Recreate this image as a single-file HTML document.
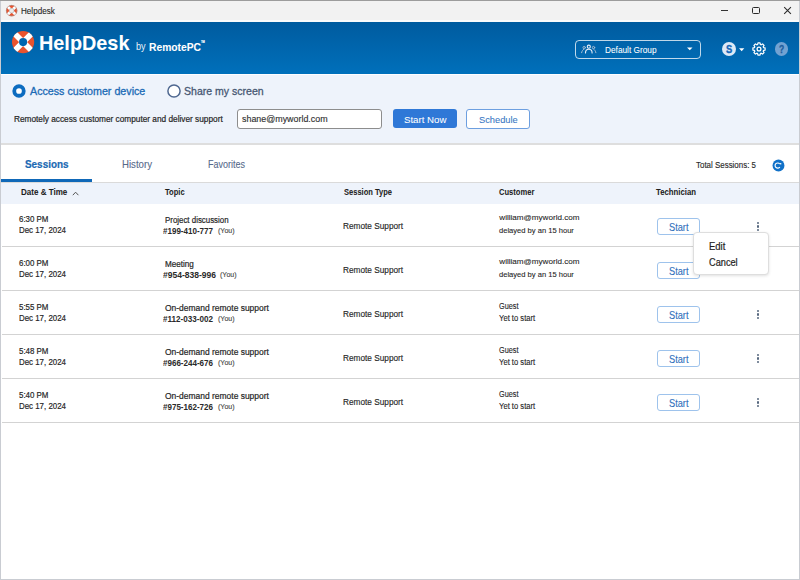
<!DOCTYPE html><html><head><meta charset="utf-8"><style>
html,body{margin:0;padding:0;width:800px;height:580px;overflow:hidden;background:#fff;}
body{position:relative;font-family:"Liberation Sans",sans-serif;}
.t{position:absolute;white-space:nowrap;line-height:1;transform-origin:0 0;}
.b{position:absolute;box-sizing:content-box;}
svg{overflow:visible}
</style></head><body>
<div class="b" style="left:0;top:0;width:800px;height:22px;background:#f2f2f2;"></div>
<div class="b" style="left:0;top:20px;width:800px;height:2px;background:#fbfbfb;"></div>
<div class="t" style="left:20.60px;top:6.75px;font-size:8.8px;color:#262626;-webkit-text-stroke:0.12px #262626;transform:scaleX(0.920);">Helpdesk</div>
<svg width="11.3" height="11.3" viewBox="-5.65 -5.65 11.3 11.3" style="position:absolute;left:5.549999999999999px;top:4.75px">
<defs><clipPath id="c11"><circle r="5.65"/></clipPath></defs>
<circle r="5.65" fill="#e9532e"/>
<g clip-path="url(#c11)"><path d="M-5.65 -5.65L5.65 5.65M5.65 -5.65L-5.65 5.65" stroke="#fff" stroke-width="2.8"/></g>
<circle r="2.2" fill="#ececec"/><circle r="5.3500000000000005" fill="none" stroke="#9a9a9a" stroke-width="0.6"/><circle r="2.4000000000000004" fill="none" stroke="#9a9a9a" stroke-width="0.5"/>
</svg>
<div class="b" style="left:721px;top:10px;width:7px;height:1px;background:#333;"></div>
<div class="b" style="left:752px;top:6.8px;width:5.8px;height:5.4px;border:1px solid #2a2a2a;border-radius:1.5px;"></div>
<svg width="10" height="10" style="position:absolute;left:783px;top:6px" viewBox="0 0 10 10"><path d="M1.2 1.2L7.9 7.9M7.9 1.2L1.2 7.9" stroke="#2a2a2a" stroke-width="1.05"/></svg>
<div class="b" style="left:0;top:22px;width:800px;height:52px;background:linear-gradient(#005b9f,#0070bb);"></div>
<svg width="22.2" height="22.2" viewBox="-11.1 -11.1 22.2 22.2" style="position:absolute;left:12.000000000000002px;top:31.1px">
<defs><clipPath id="c23"><circle r="11.1"/></clipPath></defs>
<circle r="11.1" fill="#e9532e"/>
<g clip-path="url(#c23)"><path d="M-11.1 -11.1L11.1 11.1M11.1 -11.1L-11.1 11.1" stroke="#fff" stroke-width="5.7"/></g>
<circle r="4.05" fill="#0065af"/>
</svg>
<div class="t" style="left:39.00px;top:33.25px;font-size:20.5px;color:#fff;font-weight:bold;-webkit-text-stroke:0.05px #fff;transform:scaleX(0.968);">HelpDesk</div>
<div class="t" style="left:136.00px;top:42.44px;font-size:10px;color:#eaf1f8;transform:scaleX(0.910);">by</div>
<div class="t" style="left:149.00px;top:42.01px;font-size:10.5px;color:#fff;font-weight:bold;-webkit-text-stroke:0.05px #fff;transform:scaleX(0.980);">RemotePC</div>
<div class="t" style="left:201.20px;top:41.26px;font-size:3px;color:#fff;-webkit-text-stroke:0.2px #fff;transform:scaleX(0.877);">TM</div>
<div class="b" style="left:575px;top:40px;width:123.5px;height:16.5px;border:1px solid rgba(255,255,255,.75);border-radius:4px;"></div>
<svg width="28" height="18" viewBox="0 0 28 18" style="position:absolute;left:576px;top:40px" fill="none" stroke-linecap="round">
<circle cx="12.8" cy="6.7" r="1.55" stroke="#e6eef8" stroke-width="1.1"/><path d="M9.5 12.9C9.5 10.6 10.9 9.3 12.8 9.3S16.1 10.6 16.1 12.9" stroke="#e6eef8" stroke-width="1.1"/>
<circle cx="8.2" cy="7.6" r="1.2" stroke="#a9bdd2" stroke-width="1"/><path d="M5.6 12.7C5.9 11 6.8 9.8 7.7 9.3" stroke="#a9bdd2" stroke-width="1"/>
<circle cx="17.5" cy="7.6" r="1.2" stroke="#a9bdd2" stroke-width="1"/><path d="M19.9 12.7C19.6 11 18.7 9.8 17.8 9.3" stroke="#a9bdd2" stroke-width="1"/></svg>
<div class="t" style="left:604.60px;top:45.53px;font-size:9.3px;color:#fff;-webkit-text-stroke:0.05px #fff;transform:scaleX(0.891);">Default Group</div>
<svg width="6" height="4" viewBox="0 0 6 4" style="position:absolute;left:687px;top:47px"><path d="M0 0.5H5.5L2.75 3.3Z" fill="#fff"/></svg>
<div class="b" style="left:721.6px;top:41.6px;width:14px;height:14px;border-radius:50%;background:#dde9f6;"></div>
<div class="t" style="left:725.60px;top:44.23px;font-size:10.6px;color:#1566b8;font-weight:bold;-webkit-text-stroke:0.35px #1566b8;transform:scaleX(0.880);">S</div>
<svg width="6" height="4" viewBox="0 0 6 4" style="position:absolute;left:739px;top:47.6px"><path d="M0 0.3H5.3L2.65 3.2Z" fill="#fff"/></svg>
<svg width="16" height="16" viewBox="-8 -8 16 16" style="position:absolute;left:750.5px;top:40.9px"><path d="M-1.39 -4.49 L-1.05 -6.11 L1.05 -6.11 L1.39 -4.49 L2.19 -4.16 L3.58 -5.06 L5.06 -3.58 L4.16 -2.19 L4.49 -1.39 L6.11 -1.05 L6.11 1.05 L4.49 1.39 L4.16 2.19 L5.06 3.58 L3.58 5.06 L2.19 4.16 L1.39 4.49 L1.05 6.11 L-1.05 6.11 L-1.39 4.49 L-2.19 4.16 L-3.58 5.06 L-5.06 3.58 L-4.16 2.19 L-4.49 1.39 L-6.11 1.05 L-6.11 -1.05 L-4.49 -1.39 L-4.16 -2.19 L-5.06 -3.58 L-3.58 -5.06 L-2.19 -4.16Z" fill="none" stroke="#fff" stroke-width="1.2" stroke-linejoin="round"/><circle r="1.9" fill="none" stroke="#fff" stroke-width="1.3"/></svg>
<div class="b" style="left:774.6px;top:41.9px;width:13.8px;height:13.8px;border-radius:50%;background:#72a2d2;"></div>
<div class="t" style="left:779.00px;top:44.60px;font-size:10.4px;color:#1d5d9c;font-weight:bold;-webkit-text-stroke:0.3px #1d5d9c;transform:scaleX(0.820);">?</div>
<div class="b" style="left:0;top:74px;width:800px;height:1px;background:#fdfdff;"></div>
<div class="b" style="left:0;top:75px;width:800px;height:68px;background:#eef3fb;"></div>
<div class="b" style="left:0;top:143px;width:800px;height:2px;background:#dedede;"></div>
<svg width="16" height="16" viewBox="-8 -8 16 16" style="position:absolute;left:11.4px;top:82.9px"><circle r="4.75" fill="#fff" stroke="#0d6cc0" stroke-width="3.8"/></svg>
<div class="t" style="left:30.00px;top:85.57px;font-size:11.5px;color:#1a6ab5;-webkit-text-stroke:0.3px #1a6ab5;transform:scaleX(0.930);">Access customer device</div>
<svg width="16" height="16" viewBox="-8 -8 16 16" style="position:absolute;left:165.7px;top:83px"><circle r="6.1" fill="#fff" stroke="#4f6890" stroke-width="1.5"/></svg>
<div class="t" style="left:184.30px;top:85.57px;font-size:11.5px;color:#475873;-webkit-text-stroke:0.3px #475873;transform:scaleX(0.917);">Share my screen</div>
<div class="t" style="left:14.40px;top:114.74px;font-size:8.7px;color:#262626;-webkit-text-stroke:0.2px #262626;transform:scaleX(0.952);">Remotely access customer computer and deliver support</div>
<div class="b" style="left:237px;top:109px;width:142.5px;height:17.5px;border:1px solid #8d8d8d;border-radius:3px;background:#fff;"></div>
<div class="t" style="left:241.60px;top:113.92px;font-size:9.9px;color:#303030;-webkit-text-stroke:0.15px #303030;transform:scaleX(0.900);">shane@myworld.com</div>
<div class="b" style="left:393px;top:109px;width:64px;height:19px;border-radius:3px;background:#2f78d7;"></div>
<div class="t" style="left:404.00px;top:115.36px;font-size:9.5px;color:#fff;-webkit-text-stroke:0.05px #fff;transform:scaleX(1.016);">Start Now</div>
<div class="b" style="left:466px;top:109px;width:61.6px;height:17.5px;border:1px solid #6d9fe0;border-radius:3px;background:#fff;"></div>
<div class="t" style="left:478.60px;top:115.36px;font-size:9.5px;color:#3a78c4;-webkit-text-stroke:0.08px #3a78c4;transform:scaleX(0.979);">Schedule</div>
<div class="b" style="left:0;top:145px;width:800px;height:37px;background:#fff;"></div>
<div class="t" style="left:24.70px;top:159.88px;font-size:10.3px;color:#1a69b3;font-weight:bold;-webkit-text-stroke:0.2px #1a69b3;transform:scaleX(0.962);">Sessions</div>
<div class="b" style="left:1px;top:178.6px;width:91.3px;height:3px;background:#0f68b8;"></div>
<div class="t" style="left:122.00px;top:158.53px;font-size:10.6px;color:#56698a;-webkit-text-stroke:0.1px #56698a;transform:scaleX(0.910);">History</div>
<div class="t" style="left:208.00px;top:158.53px;font-size:10.6px;color:#56698a;-webkit-text-stroke:0.1px #56698a;transform:scaleX(0.849);">Favorites</div>
<div class="t" style="left:696.20px;top:160.40px;font-size:9.8px;color:#2a2a2a;-webkit-text-stroke:0.15px #2a2a2a;transform:scaleX(0.810);">Total Sessions: 5</div>
<svg width="13" height="13" viewBox="-6.5 -6.5 13 13" style="position:absolute;left:771.55px;top:158.5px"><circle r="5.95" fill="#1171c8"/><path d="M1.2 -1.6A2.6 2.6 0 1 0 1.35 1.5" fill="none" stroke="#fff" stroke-width="1.15"/><rect x="1.3" y="-2.4" width="1.5" height="1.3" fill="#fff"/></svg>
<div class="b" style="left:0;top:182px;width:800px;height:1px;background:#dadada;"></div>
<div class="b" style="left:0;top:183px;width:800px;height:21px;background:#eef3fb;"></div>
<div class="t" style="left:20.70px;top:188.12px;font-size:8.6px;color:#1e1e1e;font-weight:bold;-webkit-text-stroke:0.05px #1e1e1e;transform:scaleX(0.935);">Date &amp; Time</div>
<svg width="8" height="5" viewBox="0 0 8 5" style="position:absolute;left:71.5px;top:191px"><path d="M0.8 4.2L3.6 1.2L6.4 4.2" fill="none" stroke="#555" stroke-width="1"/></svg>
<div class="t" style="left:165.20px;top:188.12px;font-size:8.6px;color:#1e1e1e;font-weight:bold;-webkit-text-stroke:0.05px #1e1e1e;transform:scaleX(0.880);">Topic</div>
<div class="t" style="left:344.00px;top:188.12px;font-size:8.6px;color:#1e1e1e;font-weight:bold;-webkit-text-stroke:0.05px #1e1e1e;transform:scaleX(0.876);">Session Type</div>
<div class="t" style="left:498.60px;top:188.12px;font-size:8.6px;color:#1e1e1e;font-weight:bold;-webkit-text-stroke:0.05px #1e1e1e;transform:scaleX(0.881);">Customer</div>
<div class="t" style="left:656.00px;top:188.12px;font-size:8.6px;color:#1e1e1e;font-weight:bold;-webkit-text-stroke:0.05px #1e1e1e;transform:scaleX(0.903);">Technician</div>
<div class="b" style="left:2px;top:246px;width:797px;height:1px;background:#d3d3d3;"></div>
<div class="t" style="left:19.00px;top:214.71px;font-size:9.2px;color:#262626;-webkit-text-stroke:0.2px #262626;transform:scaleX(0.861);">6:30 PM</div>
<div class="t" style="left:19.00px;top:225.06px;font-size:9.5px;color:#262626;-webkit-text-stroke:0.2px #262626;transform:scaleX(0.831);">Dec 17, 2024</div>
<div class="t" style="left:164.75px;top:215.97px;font-size:8.9px;color:#262626;-webkit-text-stroke:0.2px #262626;transform:scaleX(0.889);">Project discussion</div>
<div class="t" style="left:162.50px;top:225.97px;font-size:9.6px;color:#2a2a2a;font-weight:bold;transform:scaleX(0.836);">#199-410-777</div>
<div class="t" style="left:217.60px;top:227.23px;font-size:8.0px;color:#4a4a4a;-webkit-text-stroke:0.15px #4a4a4a;transform:scaleX(0.881);">(You)</div>
<div class="t" style="left:342.50px;top:220.54px;font-size:9.4px;color:#262626;-webkit-text-stroke:0.15px #262626;transform:scaleX(0.881);">Remote Support</div>
<div class="t" style="left:499.34px;top:214.44px;font-size:8.1px;color:#262626;-webkit-text-stroke:0.1px #262626;">william@myworld.com</div>
<div class="t" style="left:498.50px;top:227.11px;font-size:7.9px;color:#262626;-webkit-text-stroke:0.1px #262626;transform:scaleX(0.959);">delayed by an 15 hour</div>
<div class="b" style="left:657.3px;top:218.1px;width:40.3px;height:14.6px;border:1px solid #9ec3ec;border-radius:3px;background:#fff;"></div>
<div class="t" style="left:669.20px;top:222.90px;font-size:10.4px;color:#2f6fbb;-webkit-text-stroke:0.1px #2f6fbb;transform:scaleX(0.889);">Start</div>
<div class="b" style="left:757.1px;top:221.90px;width:2.4px;height:2.4px;border-radius:50%;background:#56677e;"></div>
<div class="b" style="left:757.1px;top:225.45px;width:2.4px;height:2.4px;border-radius:50%;background:#56677e;"></div>
<div class="b" style="left:757.1px;top:229.00px;width:2.4px;height:2.4px;border-radius:50%;background:#56677e;"></div>
<div class="b" style="left:2px;top:290px;width:797px;height:1px;background:#d3d3d3;"></div>
<div class="t" style="left:19.00px;top:258.71px;font-size:9.2px;color:#262626;-webkit-text-stroke:0.2px #262626;transform:scaleX(0.861);">6:00 PM</div>
<div class="t" style="left:19.00px;top:269.06px;font-size:9.5px;color:#262626;-webkit-text-stroke:0.2px #262626;transform:scaleX(0.831);">Dec 17, 2024</div>
<div class="t" style="left:164.75px;top:259.97px;font-size:8.9px;color:#262626;-webkit-text-stroke:0.2px #262626;transform:scaleX(0.915);">Meeting</div>
<div class="t" style="left:162.50px;top:269.97px;font-size:9.6px;color:#2a2a2a;font-weight:bold;transform:scaleX(0.888);">#954-838-996</div>
<div class="t" style="left:219.80px;top:271.23px;font-size:8.0px;color:#4a4a4a;-webkit-text-stroke:0.15px #4a4a4a;transform:scaleX(0.881);">(You)</div>
<div class="t" style="left:342.50px;top:264.54px;font-size:9.4px;color:#262626;-webkit-text-stroke:0.15px #262626;transform:scaleX(0.881);">Remote Support</div>
<div class="t" style="left:499.34px;top:258.44px;font-size:8.1px;color:#262626;-webkit-text-stroke:0.1px #262626;">william@myworld.com</div>
<div class="t" style="left:498.50px;top:271.11px;font-size:7.9px;color:#262626;-webkit-text-stroke:0.1px #262626;transform:scaleX(0.959);">delayed by an 15 hour</div>
<div class="b" style="left:657.3px;top:262.1px;width:40.3px;height:14.6px;border:1px solid #9ec3ec;border-radius:3px;background:#fff;"></div>
<div class="t" style="left:669.20px;top:266.90px;font-size:10.4px;color:#2f6fbb;-webkit-text-stroke:0.1px #2f6fbb;transform:scaleX(0.889);">Start</div>
<div class="b" style="left:2px;top:334px;width:797px;height:1px;background:#d3d3d3;"></div>
<div class="t" style="left:19.00px;top:302.71px;font-size:9.2px;color:#262626;-webkit-text-stroke:0.2px #262626;transform:scaleX(0.861);">5:55 PM</div>
<div class="t" style="left:19.00px;top:313.06px;font-size:9.5px;color:#262626;-webkit-text-stroke:0.2px #262626;transform:scaleX(0.831);">Dec 17, 2024</div>
<div class="t" style="left:164.75px;top:303.97px;font-size:8.9px;color:#262626;-webkit-text-stroke:0.2px #262626;transform:scaleX(0.953);">On-demand remote support</div>
<div class="t" style="left:162.50px;top:313.97px;font-size:9.6px;color:#2a2a2a;font-weight:bold;transform:scaleX(0.843);">#112-033-002</div>
<div class="t" style="left:217.60px;top:315.23px;font-size:8.0px;color:#4a4a4a;-webkit-text-stroke:0.15px #4a4a4a;transform:scaleX(0.881);">(You)</div>
<div class="t" style="left:342.50px;top:308.54px;font-size:9.4px;color:#262626;-webkit-text-stroke:0.15px #262626;transform:scaleX(0.881);">Remote Support</div>
<div class="t" style="left:499.00px;top:302.37px;font-size:8.3px;color:#262626;-webkit-text-stroke:0.12px #262626;transform:scaleX(0.880);">Guest</div>
<div class="t" style="left:498.50px;top:314.37px;font-size:8.3px;color:#262626;-webkit-text-stroke:0.12px #262626;transform:scaleX(0.919);">Yet to start</div>
<div class="b" style="left:657.3px;top:306.1px;width:40.3px;height:14.6px;border:1px solid #9ec3ec;border-radius:3px;background:#fff;"></div>
<div class="t" style="left:669.20px;top:310.90px;font-size:10.4px;color:#2f6fbb;-webkit-text-stroke:0.1px #2f6fbb;transform:scaleX(0.889);">Start</div>
<div class="b" style="left:757.1px;top:309.90px;width:2.4px;height:2.4px;border-radius:50%;background:#56677e;"></div>
<div class="b" style="left:757.1px;top:313.45px;width:2.4px;height:2.4px;border-radius:50%;background:#56677e;"></div>
<div class="b" style="left:757.1px;top:317.00px;width:2.4px;height:2.4px;border-radius:50%;background:#56677e;"></div>
<div class="b" style="left:2px;top:378px;width:797px;height:1px;background:#d3d3d3;"></div>
<div class="t" style="left:19.00px;top:346.71px;font-size:9.2px;color:#262626;-webkit-text-stroke:0.2px #262626;transform:scaleX(0.861);">5:48 PM</div>
<div class="t" style="left:19.00px;top:357.06px;font-size:9.5px;color:#262626;-webkit-text-stroke:0.2px #262626;transform:scaleX(0.831);">Dec 17, 2024</div>
<div class="t" style="left:164.75px;top:347.97px;font-size:8.9px;color:#262626;-webkit-text-stroke:0.2px #262626;transform:scaleX(0.953);">On-demand remote support</div>
<div class="t" style="left:162.50px;top:357.97px;font-size:9.6px;color:#2a2a2a;font-weight:bold;transform:scaleX(0.836);">#966-244-676</div>
<div class="t" style="left:217.60px;top:359.23px;font-size:8.0px;color:#4a4a4a;-webkit-text-stroke:0.15px #4a4a4a;transform:scaleX(0.881);">(You)</div>
<div class="t" style="left:342.50px;top:352.54px;font-size:9.4px;color:#262626;-webkit-text-stroke:0.15px #262626;transform:scaleX(0.881);">Remote Support</div>
<div class="t" style="left:499.00px;top:346.37px;font-size:8.3px;color:#262626;-webkit-text-stroke:0.12px #262626;transform:scaleX(0.880);">Guest</div>
<div class="t" style="left:498.50px;top:358.37px;font-size:8.3px;color:#262626;-webkit-text-stroke:0.12px #262626;transform:scaleX(0.919);">Yet to start</div>
<div class="b" style="left:657.3px;top:350.1px;width:40.3px;height:14.6px;border:1px solid #9ec3ec;border-radius:3px;background:#fff;"></div>
<div class="t" style="left:669.20px;top:354.90px;font-size:10.4px;color:#2f6fbb;-webkit-text-stroke:0.1px #2f6fbb;transform:scaleX(0.889);">Start</div>
<div class="b" style="left:757.1px;top:353.90px;width:2.4px;height:2.4px;border-radius:50%;background:#56677e;"></div>
<div class="b" style="left:757.1px;top:357.45px;width:2.4px;height:2.4px;border-radius:50%;background:#56677e;"></div>
<div class="b" style="left:757.1px;top:361.00px;width:2.4px;height:2.4px;border-radius:50%;background:#56677e;"></div>
<div class="b" style="left:2px;top:422px;width:797px;height:1px;background:#d3d3d3;"></div>
<div class="t" style="left:19.00px;top:390.71px;font-size:9.2px;color:#262626;-webkit-text-stroke:0.2px #262626;transform:scaleX(0.861);">5:40 PM</div>
<div class="t" style="left:19.00px;top:401.06px;font-size:9.5px;color:#262626;-webkit-text-stroke:0.2px #262626;transform:scaleX(0.831);">Dec 17, 2024</div>
<div class="t" style="left:164.75px;top:391.97px;font-size:8.9px;color:#262626;-webkit-text-stroke:0.2px #262626;transform:scaleX(0.953);">On-demand remote support</div>
<div class="t" style="left:162.50px;top:401.97px;font-size:9.6px;color:#2a2a2a;font-weight:bold;transform:scaleX(0.836);">#975-162-726</div>
<div class="t" style="left:217.60px;top:403.23px;font-size:8.0px;color:#4a4a4a;-webkit-text-stroke:0.15px #4a4a4a;transform:scaleX(0.881);">(You)</div>
<div class="t" style="left:342.50px;top:396.54px;font-size:9.4px;color:#262626;-webkit-text-stroke:0.15px #262626;transform:scaleX(0.881);">Remote Support</div>
<div class="t" style="left:499.00px;top:390.37px;font-size:8.3px;color:#262626;-webkit-text-stroke:0.12px #262626;transform:scaleX(0.880);">Guest</div>
<div class="t" style="left:498.50px;top:402.37px;font-size:8.3px;color:#262626;-webkit-text-stroke:0.12px #262626;transform:scaleX(0.919);">Yet to start</div>
<div class="b" style="left:657.3px;top:394.1px;width:40.3px;height:14.6px;border:1px solid #9ec3ec;border-radius:3px;background:#fff;"></div>
<div class="t" style="left:669.20px;top:398.90px;font-size:10.4px;color:#2f6fbb;-webkit-text-stroke:0.1px #2f6fbb;transform:scaleX(0.889);">Start</div>
<div class="b" style="left:757.1px;top:397.90px;width:2.4px;height:2.4px;border-radius:50%;background:#56677e;"></div>
<div class="b" style="left:757.1px;top:401.45px;width:2.4px;height:2.4px;border-radius:50%;background:#56677e;"></div>
<div class="b" style="left:757.1px;top:405.00px;width:2.4px;height:2.4px;border-radius:50%;background:#56677e;"></div>
<div class="b" style="left:692.8px;top:232.4px;width:74px;height:40.3px;border:1px solid #dedede;border-radius:4px;background:#fff;box-shadow:0 1px 3px rgba(0,0,0,.12);"></div>
<div class="t" style="left:709.30px;top:241.63px;font-size:10px;color:#1e1e1e;-webkit-text-stroke:0.2px #1e1e1e;transform:scaleX(0.945);">Edit</div>
<div class="t" style="left:709.30px;top:257.84px;font-size:10px;color:#1e1e1e;-webkit-text-stroke:0.2px #1e1e1e;transform:scaleX(0.921);">Cancel</div>
<div class="b" style="left:0;top:0;width:1px;height:580px;background:#c9ccd2;"></div>
<div class="b" style="left:799px;top:0;width:1px;height:580px;background:#c9ccd2;"></div>
<div class="b" style="left:0;top:0;width:800px;height:1px;background:#9c9c9c;"></div>
<div class="b" style="left:0;top:579px;width:800px;height:1px;background:#c9ccd2;"></div>
</body></html>
